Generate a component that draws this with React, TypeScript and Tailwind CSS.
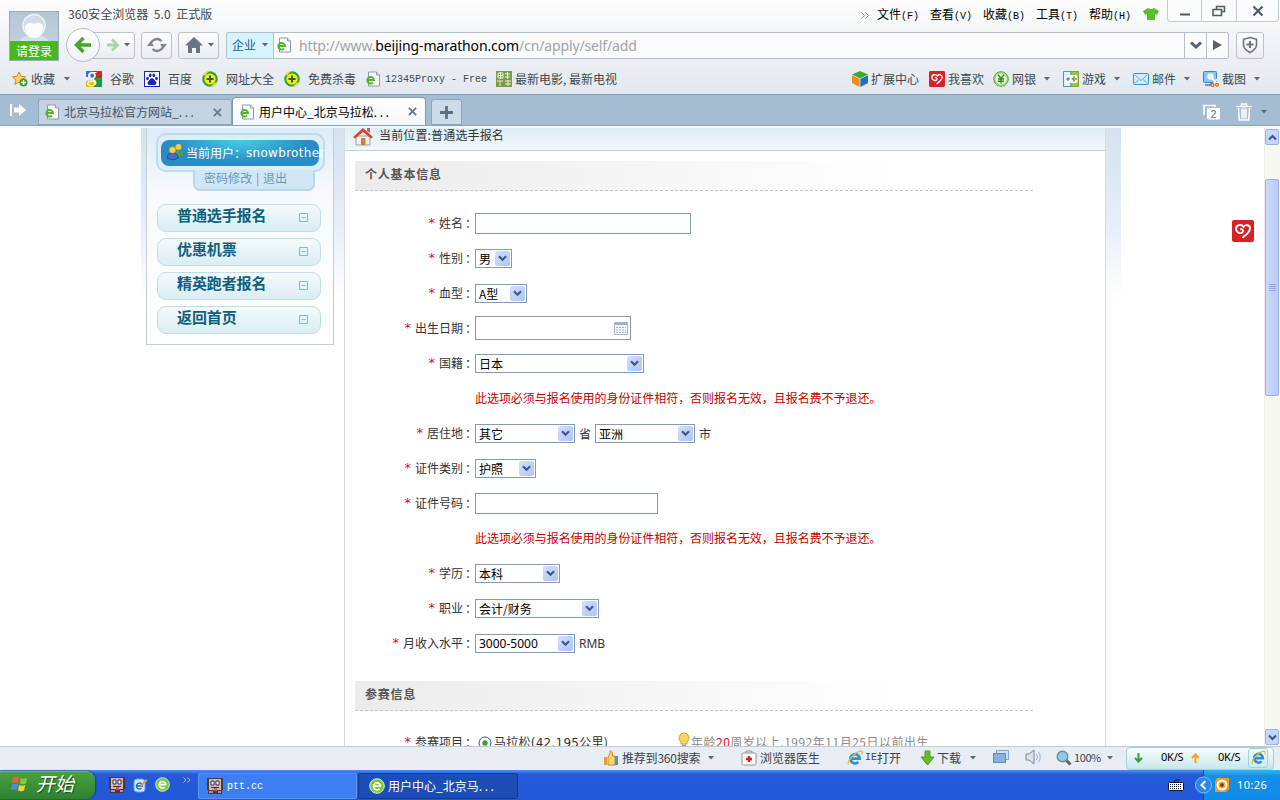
import type { ReactNode } from 'react'
import clsx from 'clsx'

function Caret({ className }: { className?: string }) {
  return (
    <svg width="6" height="4" viewBox="0 0 6 4" className={clsx('shrink-0', className)}>
      <path d="M0 0h6L3 3.5z" fill="#5d6671" />
    </svg>
  )
}

function PageIcon({ className }: { className?: string }) {
  return (
    <svg width="16" height="16" viewBox="0 0 16 16" className={clsx('shrink-0', className)}>
      <path d="M2.500 1h8l3 3v11h-11z" fill="#fbfcfd" stroke="#8d99a6" />
      <path d="M10.500 1v3h3" fill="#dfe5ea" stroke="#8d99a6" />
      <path d="M1.500 9h6.500a3.300 3.300 0 1 0-1 2.600" fill="none" stroke="#4fb52a" strokeWidth="2" />
    </svg>
  )
}

function GreenE({ size = 16 }: { size?: number }) {
  return (
    <svg width={size} height={size} viewBox="0 0 16 16" className="shrink-0">
      <circle cx="8" cy="8" r="7.3" fill="#7ac943" stroke="#d6f2b8" />
      <path d="M4.500 8.200h7a3.500 3.500 0 1 0-1.200 2.800" fill="none" stroke="#fff" strokeWidth="1.800" />
    </svg>
  )
}

function BlueE({ size = 16 }: { size?: number }) {
  return (
    <svg width={size} height={size} viewBox="0 0 16 16" className="shrink-0">
      <path d="M3.500 8.700h9.200a4.600 4.600 0 1 0-1.400 3.400" fill="none" stroke="#2f8fdc" strokeWidth="2.800" />
      <path d="M1.500 14.500C-.5 11 9 1 14.500 1.200c1 .2 1 1.800 0 3.300" fill="none" stroke="#e9b53a" strokeWidth="1.200" />
    </svg>
  )
}

function HeartIcon({ size = 16 }: { size?: number }) {
  return (
    <svg width={size} height={size} viewBox="0 0 22 22" className="shrink-0">
      <rect width="22" height="22" rx="2" fill="#da2024" />
      <path
        d="M11 17.300c3.500-2.500 7-5.800 7-9 0-3.300-4.300-4.300-6.500-1.500C9.500 4 4 4.500 4 8.800c0 3.200 3.500 5 5.800 4 1.800-1 1.500-3.300-.8-3.800"
        fill="none"
        stroke="#fff"
        strokeWidth="1.900"
        strokeLinecap="round"
      />
    </svg>
  )
}

function PlusBall() {
  return (
    <svg width="16" height="16" viewBox="0 0 16 16" className="shrink-0">
      <circle cx="8" cy="8" r="7.800" fill="#3fa02a" />
      <path d="M1 4.500A7.800 7.800 0 0 1 8 .2q-3 1-4.500 4zM15 11.500a7.800 7.800 0 0 1-7 4.300q3-1 4.500-4z" fill="#f2e23a" />
      <circle cx="8" cy="8" r="5.600" fill="#f6e92a" />
      <path d="M8 4.500v7M4.500 8h7" stroke="#1f6b1b" strokeWidth="2" />
    </svg>
  )
}

function StarIcon() {
  return (
    <svg width="16" height="16" viewBox="0 0 16 16" className="shrink-0">
      <path d="M7 1l2 4.300 4.700.5-3.500 3.100 1 4.600L7 11.200 2.900 13.500l1-4.600L.4 5.800l4.600-.5z" fill="#fbd56a" stroke="#d58a1e" />
      <circle cx="11.500" cy="11.500" r="4" fill="#4c9a2a" />
      <path d="M11.500 9v5M9 11.500h5" stroke="#fff" strokeWidth="1.400" />
    </svg>
  )
}

function GoogleIcon() {
  return (
    <svg width="16" height="16" viewBox="0 0 16 16" className="shrink-0">
      <path d="M0 0h8v6H0z" fill="#3c6fd8" />
      <path d="M8 0h8v7H8z" fill="#d9231c" />
      <path d="M8 7h8v9H8z" fill="#1f9a3d" />
      <path d="M0 10l8-1v7H0z" fill="#f4b61b" />
      <path d="M10.500 1H6.500C3.500 1 2 2.700 2 4.800 2 7 4 8 6.500 7.700c0 1 .5 1.500 0 1.800C3 9.500 1 10.800 1 12.700c0 3.400 9.500 3.400 9.500-1 0-2.200-2.800-2.700-2.600-4C10 6.500 10.500 4 8.800 2h1.700z" fill="#fff" />
      <ellipse cx="6.200" cy="4.600" rx="2" ry="2.200" fill="#3c6fd8" />
      <ellipse cx="5.600" cy="12.400" rx="3" ry="1.600" fill="#f4b61b" />
    </svg>
  )
}

function BaiduIcon() {
  return (
    <svg width="16" height="16" viewBox="0 0 16 16" className="shrink-0">
      <rect x=".5" y=".5" width="15" height="15" fill="#fff" stroke="#2021c0" />
      <g fill="#1f20c8">
        <ellipse cx="3.500" cy="7.500" rx="1.300" ry="1.800" />
        <ellipse cx="6.200" cy="4.300" rx="1.300" ry="1.900" />
        <ellipse cx="9.800" cy="4.300" rx="1.300" ry="1.900" />
        <ellipse cx="12.500" cy="7.500" rx="1.300" ry="1.800" />
        <path d="M8 7.200c2 0 2.500 2 3.800 3.200 1.500 1.600.2 3.600-1.600 3.600H5.800c-1.800 0-3.100-2-1.600-3.600C5.500 9.200 6 7.200 8 7.200z" />
      </g>
    </svg>
  )
}

function FilmIcon() {
  return (
    <svg width="16" height="16" viewBox="0 0 16 16" className="shrink-0">
      <rect width="16" height="16" fill="#7d9a45" />
      <path d="M2 2h5v5H2zM2 4.500h5M4.500 1v7M9 3h5M9 6h5M11.500 1v7M1 10h6M4 10v5M9 10h6M9 13h6M12 9v6" fill="none" stroke="#e9f0d4" />
    </svg>
  )
}

function CubeIcon() {
  return (
    <svg width="16" height="16" viewBox="0 0 16 16" className="shrink-0">
      <path d="M8 0l8 3.500L8 7.500 0 3.500z" fill="#3fa535" />
      <path d="M0 4.200L7.600 8v8L0 12z" fill="#f08a1d" />
      <path d="M16 4.200L8.400 8v8L16 12z" fill="#1f6fc4" />
    </svg>
  )
}

function YuanIcon() {
  return (
    <svg width="16" height="16" viewBox="0 0 16 16" className="shrink-0">
      <circle cx="8" cy="8" r="7.300" fill="#a9d98a" stroke="#5aa336" />
      <circle cx="8" cy="8" r="5.500" fill="#eaf7d6" />
      <path d="M5 3.800l3 3.700 3-3.700M8 7.500v5M5 8h6M5 10.300h6" fill="none" stroke="#2d8a1f" strokeWidth="1.400" />
    </svg>
  )
}

function GameIcon() {
  return (
    <svg width="16" height="16" viewBox="0 0 16 16" className="shrink-0">
      <path d="M.5.5H8v15H.5z" fill="#dff1fb" stroke="#3f97ca" />
      <path d="M8 .5h7.500v15H8z" fill="#9bc63f" stroke="#7aa62b" />
      <rect x="2.500" y="4" width="12" height="8" rx="2" fill="#fff" />
      <path d="M3 8h4M5 6v4" stroke="#1d78b5" />
      <path d="M11 5.500v5M8.800 8h5" stroke="#5f8a15" strokeDasharray="2 1" strokeWidth="1.500" />
    </svg>
  )
}

function MailIcon() {
  return (
    <svg width="16" height="16" viewBox="0 0 16 16" className="shrink-0">
      <rect x=".5" y="2.500" width="15" height="11" rx="1" fill="#d3ecfa" stroke="#3b8fc6" />
      <path d="M1.500 3.500L8 9.500l6.500-6M1.500 12.500l4.500-4M14.500 12.500l-4.500-4" fill="none" stroke="#63aeda" />
    </svg>
  )
}

function ShotIcon() {
  return (
    <svg width="16" height="16" viewBox="0 0 16 16" className="shrink-0">
      <rect x=".5" y=".5" width="13" height="11" rx="1" fill="#8cc5ee" stroke="#3983bd" />
      <circle cx="7.500" cy="5.500" r="3.300" fill="#e7f5fd" />
      <path d="M2 14h6v-3" fill="none" stroke="#3983bd" strokeWidth="1.500" />
      <path d="M9 7l5 6M14 8l-4 5" stroke="#fff" strokeWidth="1.500" />
      <circle cx="9.500" cy="14" r="1.500" fill="none" stroke="#e0711b" strokeWidth="1.300" />
      <circle cx="14" cy="13.800" r="1.400" fill="none" stroke="#e0711b" strokeWidth="1.300" />
    </svg>
  )
}

function SmallX() {
  return (
    <svg width="9" height="9" viewBox="0 0 10 10" className="shrink-0">
      <path d="M1 1l8 8M9 1L1 9" stroke="#667789" strokeWidth="2" />
    </svg>
  )
}

const navBtn = 'flex h-[27px] shrink-0 items-center rounded-[3px] border border-[#b9c3ce] bg-linear-to-b from-[#fdfdfe] to-[#e9edf2]'

function Header() {
  return (
    <header className="h-[94px] bg-linear-to-b from-[#fdfdfe] to-[#e2e8ee] text-[12px] text-[#40484f]">
      <div className="flex h-[64px]">
        <div className="mt-[11px] ml-[9px] flex h-[50px] w-[50px] shrink-0 flex-col border border-[#98acbc] bg-linear-to-b from-[#b5c6d5] to-[#c7d5e0]">
          <svg width="48" height="30" viewBox="0 0 48 30">
            <path d="M9 30q3-5 10-6h10q8 1 10 6z" fill="#d6e0e8" />
            <circle cx="24" cy="14" r="11.500" fill="#d1dce6" stroke="#eff3f6" strokeWidth="1.500" />
            <path d="M14.500 15q2-4 5.500-4 4 2 8 0 4 0 5.500 4-.5 7-4.500 10.500-5 2.500-10 0-4-3.500-4.500-10.500z" fill="#fbfcfd" />
          </svg>
          <div className="h-[19px] bg-[#48b81d] text-center leading-[20px] whitespace-nowrap text-white">请登录</div>
        </div>
        <div className="flex min-w-0 flex-1 flex-col">
          <div className="flex h-[32px] items-start">
            <div className="mt-[5px] ml-[9px] w-[200px] leading-[18px] tracking-[0.05px] whitespace-pre">360安全浏览器  5.0  正式版</div>
            <div className="mt-[6px] ml-[593px] flex h-[18px] shrink-0 items-center leading-[18px] text-black">
              <svg width="8" height="7" viewBox="0 0 8 7" className="mr-[8px]">
                <path d="M.5.5l3 3-3 3M4.500.5l3 3-3 3" fill="none" stroke="#8a929a" />
              </svg>
              {[['文件', 'F'], ['查看', 'V'], ['收藏', 'B'], ['工具', 'T'], ['帮助', 'H']].map(([label, key]) => (
                <span key={key} className="w-[53px] whitespace-nowrap">
                  {label}
                  <span className="font-['Liberation_Mono'] text-[10px]">({key})</span>
                </span>
              ))}
            </div>
            <svg width="16" height="14" viewBox="0 0 16 14" className="mt-[7px] ml-px shrink-0">
              <path d="M5 1q3 2 6 0l5 3-2 4-2-1v6H4V7L2 8 0 4z" fill="#5bbf33" />
            </svg>
            <div className="ml-[8px] flex h-[22px] w-[112px] shrink-0 rounded-b-[4px] border border-t-0 border-[#c2cad3] bg-[#fafbfc]">
              <div className="flex w-[34px] items-center justify-center border-r border-[#c2cad3]">
                <svg width="12" height="12" viewBox="0 0 12 12"><path d="M1 9.500h10" stroke="#505b68" strokeWidth="2" /></svg>
              </div>
              <div className="flex w-[35px] items-center justify-center border-r border-[#c2cad3]">
                <svg width="14" height="12" viewBox="0 0 14 12">
                  <path d="M4.500 4V1.500h8v5H10M1 4.500h8.500v6H1z" fill="none" stroke="#505b68" strokeWidth="1.500" />
                </svg>
              </div>
              <div className="flex flex-1 items-center justify-center">
                <svg width="12" height="12" viewBox="0 0 12 12"><path d="M1.500 1.500l9 9M10.500 1.500l-9 9" stroke="#505b68" strokeWidth="2.200" /></svg>
              </div>
            </div>
          </div>
          <div className="-mt-px flex h-[28px] items-center">
            <div className="z-10 ml-[7px] flex h-[34px] w-[34px] shrink-0 items-center justify-center rounded-full border border-[#b4bcc5] bg-linear-to-b from-white to-[#eef1f4]">
              <svg width="18" height="18" viewBox="0 0 18 18"><path d="M9.500 2L2.500 9l7 7M3 9h14" fill="none" stroke="#45a62b" strokeWidth="3.400" /></svg>
            </div>
            <div className={clsx(navBtn, '-ml-[14px] w-[49px] pl-[19px]')}>
              <svg width="14" height="14" viewBox="0 0 14 14" className="shrink-0"><path d="M6 1.500L11.500 7 6 12.500M1 7h10" fill="none" stroke="#a5d69c" strokeWidth="2.800" /></svg>
              <Caret className="ml-[4px]" />
            </div>
            <div className={clsx(navBtn, 'ml-[6px] w-[31px] justify-center')}>
              <svg width="20" height="18" viewBox="0 0 20 18">
                <path d="M3.500 10a6.500 6.500 0 0 1 11-5M16.500 8a6.500 6.500 0 0 1-11 5" fill="none" stroke="#7b8693" strokeWidth="2.400" />
                <path d="M0 10h7L3.500 5.500zM13 8h7l-3.500 4.500z" fill="#7b8693" />
              </svg>
            </div>
            <div className={clsx(navBtn, 'ml-[6px] w-[41px] pl-[6px]')}>
              <svg width="18" height="16" viewBox="0 0 18 16"><path d="M9 0l9 8.500h-3V16h-4v-5H7v5H3V8.500H0z" fill="#6a7582" /></svg>
              <Caret className="ml-[5px]" />
            </div>
            <div className="ml-[7px] flex h-[27px] w-[1003px] shrink-0 items-center rounded-[2px] border border-[#b3bfca] bg-[#fafbfd]">
              <div className="flex h-[25px] w-[47px] shrink-0 items-center border-r border-[#8fd0ea] bg-[#d5f3fc] pl-[5px] text-[#155f8e]">
                <span className="w-[30px] whitespace-nowrap">企业</span>
                <Caret />
              </div>
              <PageIcon className="ml-[3px]" />
              <div className="ml-[6px] flex-1 font-['Noto_Sans'] text-[14px] tracking-[-0.13px] whitespace-nowrap text-[#a0a4a8]">
                http://www.<span className="text-black">beijing-marathon.com</span>/cn/apply/self/add
              </div>
              <div className="flex h-full w-[22px] items-center justify-center border-l border-[#b3bfca]">
                <svg width="12" height="8" viewBox="0 0 12 8"><path d="M1 1.500l5 4.500 5-4.500" fill="none" stroke="#56616e" strokeWidth="3" /></svg>
              </div>
              <div className="flex h-full w-[22px] items-center justify-center border-l border-[#b3bfca]">
                <svg width="9" height="10" viewBox="0 0 9 10"><path d="M0 0l9 5-9 5z" fill="#56616e" /></svg>
              </div>
            </div>
            <div className={clsx(navBtn, 'ml-[7px] w-[28px] justify-center')}>
              <svg width="18" height="18" viewBox="0 0 18 18">
                <path d="M9 1.500l6.500 1.800v5.200q0 5-6.500 8-6.500-3-6.500-8V3.300z" fill="none" stroke="#69747f" strokeWidth="1.600" />
                <path d="M9 5v7M5.500 8.500h7" stroke="#69747f" strokeWidth="2" />
              </svg>
            </div>
          </div>
        </div>
      </div>
      <Bookmarks />
    </header>
  )
}

function Mark({ icon, children, className }: { icon: ReactNode; children: ReactNode; className: string }) {
  return (
    <div className={clsx('flex shrink-0 items-center whitespace-nowrap', className)}>
      {icon}
      {children}
    </div>
  )
}

function Bookmarks() {
  return (
    <div className="flex h-[30px] items-center pl-[12px]">
      <Mark icon={<StarIcon />} className="w-[74px] gap-[3px]">收藏<Caret className="ml-[6px]" /></Mark>
      <Mark icon={<GoogleIcon />} className="w-[58px] gap-[8px]">谷歌</Mark>
      <Mark icon={<BaiduIcon />} className="w-[58px] gap-[8px]">百度</Mark>
      <Mark icon={<PlusBall />} className="w-[82px] gap-[8px]">网址大全</Mark>
      <Mark icon={<PlusBall />} className="w-[82px] gap-[8px]">免费杀毒</Mark>
      <Mark icon={<PageIcon />} className="w-[130px] gap-[3px]">
        <span className="font-['Liberation_Mono'] text-[10px] whitespace-pre">12345Proxy - Free</span>
      </Mark>
      <Mark icon={<FilmIcon />} className="w-[356px] gap-[3px]">最新电影, 最新电视</Mark>
      <Mark icon={<CubeIcon />} className="w-[77px] gap-[3px]">扩展中心</Mark>
      <Mark icon={<HeartIcon />} className="w-[64px] gap-[3px]">我喜欢</Mark>
      <Mark icon={<YuanIcon />} className="w-[70px] gap-[3px]">网银<Caret className="ml-[5px]" /></Mark>
      <Mark icon={<GameIcon />} className="w-[70px] gap-[3px]">游戏<Caret className="ml-[5px]" /></Mark>
      <Mark icon={<MailIcon />} className="w-[70px] gap-[3px]">邮件<Caret className="ml-[5px]" /></Mark>
      <Mark icon={<ShotIcon />} className="gap-[3px]">截图<Caret className="ml-[5px]" /></Mark>
    </div>
  )
}

function TabStrip() {
  return (
    <div className="flex h-[34px] flex-col border-t border-[#7e9bb8] bg-[#a4bdd3] text-[12px]">
      <div className="flex h-[30px] items-end">
        <div className="flex h-[30px] w-[38px] shrink-0 items-center pl-[10px]">
          <svg width="17" height="14" viewBox="0 0 17 14"><path d="M0 1h2v12H0zM4 4.500h5V1l7 6-7 6V9.500H4z" fill="#fff" /></svg>
        </div>
        <div className="flex h-[26px] w-[194px] shrink-0 items-center rounded-t-[3px] border border-[#8ba5bf] bg-[#c3d3e1] pr-[9px] pl-[6px] text-[#45525e]">
          <PageIcon />
          <span className="ml-[3px] flex-1 whitespace-nowrap">北京马拉松官方网站_<span className="tracking-[2.600px]">...</span></span>
          <SmallX />
        </div>
        <div className="flex h-[28px] w-[194px] shrink-0 items-center rounded-t-[4px] border border-b-0 border-[#7f9ab5] bg-linear-to-b from-white to-[#f4f7fa] pr-[8px] pl-[7px] text-black">
          <PageIcon />
          <span className="ml-[3px] flex-1 whitespace-nowrap">用户中心_北京马拉松<span className="tracking-[2.600px]">...</span></span>
          <SmallX />
        </div>
        <div className="ml-[5px] flex h-[26px] w-[31px] items-center justify-center rounded-t-[3px] border border-[#8ba5bf] bg-[#cddbe7]">
          <svg width="13" height="13" viewBox="0 0 13 13"><path d="M6.500 0v13M0 6.500h13" stroke="#5f6e7e" strokeWidth="2.800" /></svg>
        </div>
        <div className="ml-auto flex h-[27px] w-[77px] shrink-0 items-center">
          <svg width="18" height="16" viewBox="0 0 18 16">
            <path d="M1 11V1.500h11V3" fill="none" stroke="#fff" strokeWidth="1.600" />
            <rect x="4" y="4" width="13" height="11.500" rx="1" fill="#fff" />
            <text x="10.500" y="13.500" fontSize="10" textAnchor="middle" fill="#52687d" fontFamily="Liberation Sans">2</text>
          </svg>
          <svg width="16" height="18" viewBox="0 0 16 18" className="ml-[15px]">
            <path d="M5.500 3V1h5v2M.5 3.500h15M2.500 5l.8 12h9.400l.8-12M6 5.500v10M8 5.500v10M10 5.500v10" fill="none" stroke="#fff" strokeWidth="1.500" />
          </svg>
          <Caret className="ml-[9px]" />
        </div>
      </div>
      <div className="h-[3px] border-t border-[#89a3bd] bg-[#f4f7fa]" />
    </div>
  )
}

function SideItem({ children }: { children: string }) {
  return (
    <div className="flex h-[28px] items-center justify-between rounded-[9px] border border-[#c3dde6] bg-linear-to-b from-[#f4fafc] to-[#d9edf2] pr-[12px] pl-[19px]">
      <span className="-mt-[7px] text-[15px] leading-[20px] font-bold tracking-[-0.1px] text-[#0c6080]">{children}</span>
      <svg width="9" height="9" viewBox="0 0 9 9" className="-mt-[2px]"><path d="M.5.5h8v8h-8zM2.500 4.500h4" fill="none" stroke="#80b8c8" /></svg>
    </div>
  )
}

function Sidebar() {
  return (
    <aside className="relative z-10 h-[217px] w-[188px] shrink-0 border border-t-0 border-[#c3ced9] bg-linear-to-b from-[#dcecf8] via-[#f6fafd] via-30% to-white px-[9px] pt-[5px]">
      <div className="h-[39px] w-[169px] rounded-[10px] border-2 border-[#bcdcee] bg-[#dceef8] px-[3px] pt-[5px]">
        <div className="flex h-[26px] w-[158px] items-center rounded-[8px] bg-radial-[at_50%_0%] from-[#45cfe3] to-[#2b8bc6] to-60% pl-[6px] text-[12px] whitespace-nowrap text-white">
          <svg width="17" height="18" viewBox="0 0 17 18" className="-mt-[3px] mr-[2px] shrink-0">
            <path d="M8 9q4-3 8 1v3H9z" fill="#4ba53a" />
            <circle cx="11.500" cy="4" r="3" fill="#f8c93c" />
            <path d="M0 15q0-5 5.500-5t5.500 5l-5 2z" fill="#3f6fd2" stroke="#224a9e" />
            <circle cx="5.500" cy="7" r="3.300" fill="#f9cf4b" stroke="#b8862a" strokeWidth=".6" />
          </svg>
          <span className="w-[61px]">当前用户：</span>
          <span className="font-['DejaVu_Sans'] tracking-[0.3px]">snowbrother</span>
        </div>
      </div>
      <div className="-mt-[2px] ml-[37px] h-[21px] w-[122px] rounded-b-[7px] border-2 border-t-0 border-[#b8d8ea] bg-[#d2e7f5] pl-[9px] text-[12px] leading-[15px] tracking-[0.05px] whitespace-nowrap text-[#6b98b4]">
        密码修改 <span className="mx-px">|</span> 退出
      </div>
      <div className="mt-[13px] ml-px flex w-[164px] flex-col gap-[6px]">
        <SideItem>普通选手报名</SideItem>
        <SideItem>优惠机票</SideItem>
        <SideItem>精英跑者报名</SideItem>
        <SideItem>返回首页</SideItem>
      </div>
    </aside>
  )
}

function Select({ value, className }: { value: string; className: string }) {
  return (
    <div className={clsx('flex h-[19px] shrink-0 items-center justify-between border border-[#7f9db9] bg-white pr-px pl-[3px] whitespace-nowrap text-black', className)}>
      <span className="leading-[17px]">{value}</span>
      <div className="flex h-[15px] w-[15px] shrink-0 items-center justify-center rounded-[2px] bg-linear-to-br from-[#d3e0fd] to-[#aec4f5]">
        <svg width="9" height="7" viewBox="0 0 9 7"><path d="M1 1.200l3.500 3.500L8 1.200" fill="none" stroke="#3f5787" strokeWidth="2.200" /></svg>
      </div>
    </div>
  )
}

function Row({ label, children }: { label?: string; children: ReactNode }) {
  return (
    <div className="flex h-[35px] items-center text-[12px] text-[#333]">
      <div className="-mt-[2px] flex w-[130px] shrink-0 justify-end whitespace-nowrap">
        {label && (
          <>
            <span className="mr-[4px] font-['DejaVu_Sans'] text-[13px] leading-[18px] text-[#e0101c]">*</span>
            <span>{label}</span>
            <span className="w-[12px] pl-[2px]">：</span>
          </>
        )}
      </div>
      {children}
    </div>
  )
}

function SectionTitle({ children }: { children: string }) {
  return (
    <div className="h-[30px] w-[678px] border-b border-dashed border-[#c6c6c6] bg-linear-to-r from-[#ebebeb] to-white to-80% pl-[10px] text-[12px] leading-[25px] font-bold tracking-[0.8px] text-[#555]">
      {children}
    </div>
  )
}

const warning = '此选项必须与报名使用的身份证件相符，否则报名无效，且报名费不予退还。'

function Warning() {
  return <span className="-mt-[2px] tracking-[-0.05px] whitespace-nowrap text-[#c80000]">{warning}</span>
}

function Content() {
  return (
    <main className="h-full w-[762px] shrink-0 border-x border-[#d5dce3] bg-white">
      <div className="flex h-[23px] items-start border-b border-[#c4d2d8] bg-linear-to-b from-[#deeef6] to-[#eef7f9] pl-[8px] text-[12px] leading-[14px] tracking-[0.15px] text-[#333]">
        <svg width="20" height="18" viewBox="0 0 20 18" className="mr-[6px]">
          <path d="M3 8h14v9H3z" fill="#f3efe9" stroke="#a79c92" />
          <path d="M10 0L0 9l2 1.500L10 4l8 6.500L20 9z" fill="#d9432f" />
          <path d="M14 0h3v5l-3-2z" fill="#a8695a" />
          <path d="M8 10h4.500v7H8z" fill="#c98045" />
        </svg>
        当前位置:普通选手报名
      </div>
      <div className="mt-[10px] pl-[10px]">
        <SectionTitle>个人基本信息</SectionTitle>
      </div>
      <div className="mt-[15px]">
        <Row label="姓名"><div className="h-[21px] w-[216px] border border-[#7f9db9]" /></Row>
        <Row label="性别"><Select value="男" className="w-[37px]" /></Row>
        <Row label="血型"><Select value="A型" className="w-[52px]" /></Row>
        <Row label="出生日期">
          <div className="-mt-px flex h-[24px] w-[156px] items-center justify-end border border-[#8f969c] pr-[2px]">
            <svg width="14" height="13" viewBox="0 0 14 13">
              <rect x=".5" y=".5" width="13" height="12" fill="#f3f6fa" stroke="#aab6c8" />
              <path d="M1 2h12" stroke="#9fb0cb" strokeWidth="2" />
              <path d="M2 5.500h10M2 8h10M2 10.500h10" stroke="#a9b6c9" strokeDasharray="2 1" />
            </svg>
          </div>
        </Row>
        <Row label="国籍"><Select value="日本" className="w-[169px]" /></Row>
        <Row><Warning /></Row>
        <Row label="居住地">
          <Select value="其它" className="w-[100px]" />
          <span className="ml-[4px] w-[16px]">省</span>
          <Select value="亚洲" className="w-[100px]" />
          <span className="ml-[4px]">市</span>
        </Row>
        <Row label="证件类别"><Select value="护照" className="w-[61px]" /></Row>
        <Row label="证件号码"><div className="h-[21px] w-[183px] border border-[#7f9db9]" /></Row>
        <Row><Warning /></Row>
        <Row label="学历"><Select value="本科" className="w-[85px]" /></Row>
        <Row label="职业"><Select value="会计/财务" className="w-[124px]" /></Row>
        <Row label="月收入水平">
          <Select value="3000-5000" className="w-[100px] font-['Noto_Sans']" />
          <span className="ml-[4px] font-['Noto_Sans']">RMB</span>
        </Row>
      </div>
      <div className="mt-[20px] pl-[10px]">
        <SectionTitle>参赛信息</SectionTitle>
      </div>
      <div className="mt-[14px]">
        <Row label="参赛项目">
          <svg width="14" height="14" viewBox="0 0 14 14" className="mr-[2px] ml-[3px] shrink-0">
            <circle cx="7" cy="7" r="6" fill="#fff" stroke="#2c5a80" />
            <circle cx="7" cy="7" r="2.700" fill="#35a435" />
          </svg>
          <span className="w-[183px] tracking-[0.25px] whitespace-nowrap">马拉松<span className="font-['DejaVu_Sans']">(42.195</span>公里)</span>
          <svg width="14" height="17" viewBox="0 0 14 17" className="-mt-[4px] shrink-0">
            <path d="M7 1a5 5 0 0 1 3 9v2H4v-2a5 5 0 0 1 3-9z" fill="#fbd55d" stroke="#dba02b" />
            <path d="M5 13.500h4M5 15.500h4" stroke="#9098a2" strokeWidth="1.500" />
          </svg>
          <span className="-mt-px tracking-[0.5px] whitespace-nowrap text-[#8b8b8b]">
            年龄<span className="text-[#e0101c]">20</span>周岁以上,1992年11月25日以前出生
          </span>
        </Row>
      </div>
    </main>
  )
}

function Scrollbar() {
  return (
    <div className="flex h-full w-[16px] shrink-0 flex-col border-l border-[#eeede5] bg-[#f8f8f3]">
      <div className="mt-px flex h-[16px] w-[14px] items-center justify-center rounded-[2px] border border-[#9ab2e6] bg-[#c6d5fb]">
        <svg width="9" height="7" viewBox="0 0 9 7"><path d="M1 5.500L4.500 2 8 5.500" fill="none" stroke="#42568c" strokeWidth="2.200" /></svg>
      </div>
      <div className="mt-[34px] flex h-[217px] w-[14px] items-center justify-center rounded-[2px] border border-[#9ab2e6] bg-linear-to-r from-[#cbd8fc] to-[#b9cbf8]">
        <svg width="7" height="8" viewBox="0 0 7 8"><path d="M0 .5h7M0 2.500h7M0 4.500h7M0 6.500h7" stroke="#90abe8" /></svg>
      </div>
      <div className="mt-auto mb-[1px] flex h-[16px] w-[14px] items-center justify-center rounded-[2px] border border-[#9ab2e6] bg-[#c6d5fb]">
        <svg width="9" height="7" viewBox="0 0 9 7"><path d="M1 1.500L4.500 5 8 1.500" fill="none" stroke="#42568c" strokeWidth="2.200" /></svg>
      </div>
    </div>
  )
}

function StatusBar() {
  return (
    <div className="flex h-[24px] items-center border-t border-[#c3cad2] bg-[#e8edf3] pl-[603px] text-[12px] leading-[16px] text-[#3a434c]">
      <div className="-mt-[2px] flex w-[138px] shrink-0 items-center gap-[3px] whitespace-nowrap">
        <svg width="16" height="16" viewBox="0 0 16 16" className="shrink-0">
          <path d="M1 7h3v8H1z" fill="#e6a23a" />
          <path d="M5 7l2-3V1q3 0 2.500 5H12v9H5z" fill="#fcd470" stroke="#c98c2a" />
          <path d="M12 6h3v9h-3z" fill="#4a90d2" />
        </svg>
        <span className="tracking-[-0.2px]">推荐到360搜索</span>
        <Caret className="ml-[5px]" />
      </div>
      <div className="-mt-[2px] flex w-[106px] shrink-0 items-center gap-[3px] whitespace-nowrap">
        <svg width="16" height="16" viewBox="0 0 16 16" className="shrink-0">
          <path d="M5 3V1h6v2" fill="none" stroke="#8b9299" />
          <rect x="1" y="3" width="14" height="12" rx="1.500" fill="#fff" stroke="#8b9299" />
          <path d="M8 6v6M5 9h6" stroke="#de2020" strokeWidth="2.400" />
        </svg>
        浏览器医生
      </div>
      <div className="-mt-[2px] flex w-[73px] shrink-0 items-center whitespace-nowrap">
        <BlueE />
        <span className="ml-[2px] w-[12px] font-['Liberation_Mono'] text-[10px]">IE</span>
        <span>打开</span>
      </div>
      <div className="-mt-[2px] flex w-[73px] shrink-0 items-center gap-[2px] whitespace-nowrap">
        <svg width="15" height="16" viewBox="0 0 15 16" className="shrink-0"><path d="M5 1h5v6h4l-6.500 8L1 7h4z" fill="#66bb2a" stroke="#4a9a1c" /></svg>
        下载
        <Caret className="ml-[7px]" />
      </div>
      <svg width="16" height="14" viewBox="0 0 16 14" className="-mt-[3px] shrink-0">
        <rect x="3.500" y=".5" width="12" height="9" fill="#cfe0f0" stroke="#86a7c6" />
        <rect x=".5" y="3.500" width="12" height="9" fill="#84b4de" stroke="#5f8db8" />
      </svg>
      <svg width="17" height="16" viewBox="0 0 17 16" className="-mt-[3px] ml-[16px] shrink-0">
        <path d="M1 5h3l5-4v14l-5-4H1z" fill="#dfe3e7" stroke="#7f878f" />
        <path d="M11.500 5q2 3 0 6M13.500 3q3.500 5 0 10" fill="none" stroke="#8fb4d8" />
      </svg>
      <svg width="16" height="16" viewBox="0 0 16 16" className="-mt-[2px] ml-[14px] shrink-0">
        <path d="M9 9l5.500 5.500" stroke="#5b646d" strokeWidth="3" />
        <circle cx="6.500" cy="6.500" r="5.300" fill="#8cc8f0" stroke="#7b8791" strokeWidth="1.400" />
      </svg>
      <span className="-mt-[3px] ml-[2px] w-[33px] shrink-0 text-[11px] tracking-[-0.4px]">100%</span>
      <Caret className="-mt-[2px]" />
      <div className="ml-auto flex h-[23px] w-[148px] shrink-0 items-center rounded-[4px] border border-[#a8cdd5] bg-linear-to-b from-[#f8fcfc] to-[#c5e9ec] pl-[7px] font-['Noto_Sans'] text-[11px] tracking-[-0.2px] text-black">
        <svg width="9" height="10" viewBox="0 0 9 10" className="-mt-[2px] shrink-0"><path d="M4.500 0v8M1 5l3.500 3.500L8 5" fill="none" stroke="#35a02b" strokeWidth="2" /></svg>
        <span className="-mt-[3px] ml-[18px] w-[30px] whitespace-nowrap">0K/S</span>
        <svg width="9" height="10" viewBox="0 0 9 10" className="-mt-[2px] shrink-0"><path d="M4.500 10V2M1 5l3.500-3.500L8 5" fill="none" stroke="#f0a41c" strokeWidth="2" /></svg>
        <span className="-mt-[3px] ml-[18px] w-[30px] whitespace-nowrap">0K/S</span>
        <span className="-mt-[2px] flex h-[20px] w-[20px] items-center justify-center rounded-[3px] border border-[#9fd2da]"><BlueE size={15} /></span>
      </div>
      <div className="w-[6px] shrink-0" />
    </div>
  )
}

function PttIcon() {
  return (
    <svg width="16" height="16" viewBox="0 0 16 16" className="shrink-0">
      <path d="M0 0h16v12h-1v4H1v-4H0z" fill="#4e3836" />
      <path d="M2 1h12v11H2z" fill="#cfb9b4" />
      <path d="M4 3h3v4H4zM9 3h3v4H9z" fill="#fff" stroke="#38285a" />
      <path d="M4 9h8v1H4z" fill="#4a2c2c" />
      <path d="M7 10h3v3H7z" fill="#e0478d" />
      <path d="M2 13h4v2H2zM11 13h3v2h-3z" fill="#a89a94" />
    </svg>
  )
}

function Taskbar() {
  return (
    <div className="flex h-[30px] items-center bg-linear-to-b from-[#4a92ee] via-[#245adb] via-15% to-[#2258d6] text-[12px] text-white">
      <div className="flex h-[28px] w-[95px] shrink-0 items-center rounded-r-[9px] border-t border-[#6cb765] bg-linear-to-b from-[#49a040] to-[#2f822d] pl-[11px] shadow-[1px_0_2px_#173f8a]">
        <svg width="17" height="16" viewBox="0 0 17 16" className="-mt-[3px] shrink-0">
          <path d="M2 1.500q3-1.500 6 0L7 7Q4 5.500 1 7z" fill="#f0612c" />
          <path d="M9.500 2q3 1.500 6.500 0l-1.200 5.500q-3 1.500-6 0z" fill="#8cc63f" />
          <path d="M.8 8.500q3-1.500 6 0L5.500 14q-3-1.500-5.500 0z" fill="#4a8cf0" />
          <path d="M8 9q3 1.500 6.300 0L13 14.500q-3 1.500-6 0z" fill="#fbd02f" />
        </svg>
        <span className="-mt-[5px] ml-[8px] text-[19px] leading-[24px] whitespace-nowrap italic [text-shadow:1px_1px_1px_#1c4a1a]">开始</span>
      </div>
      <div className="-mt-px ml-[14px] flex shrink-0 items-center gap-[7px]">
        <PttIcon />
        <svg width="16" height="16" viewBox="0 0 16 16">
          <rect x="2" y="2" width="11" height="13" rx="3" fill="#cdeafb" stroke="#5aa7dc" />
          <path d="M4.500 9h6a3 3 0 1 0-1 2.300" fill="none" stroke="#1e6fc0" strokeWidth="1.400" />
          <path d="M8 8l6-6 1.500 1.500-6 6z" fill="#e29a4c" />
        </svg>
        <GreenE size={15} />
      </div>
      <svg width="8" height="6" viewBox="0 0 8 6" className="mb-[10px] ml-[13px] shrink-0"><path d="M.5.5L3 3 .5 5.500M4.500.5L7 3 4.500 5.500" fill="none" stroke="#a9c9f8" /></svg>
      <div className="mt-[2px] ml-[7px] flex h-[26px] w-[159px] shrink-0 items-center gap-[4px] rounded-[2px] border border-[#5b97f8] bg-[#3c7ff3] pl-[8px]">
        <PttIcon />
        <span className="font-['Liberation_Mono'] text-[10px]">ptt.cc</span>
      </div>
      <div className="mt-[2px] ml-px flex h-[26px] w-[160px] shrink-0 items-center gap-[3px] rounded-[2px] border border-[#15398b] bg-[#1c4db6] pl-[10px]">
        <GreenE />
        <span className="-mt-px whitespace-nowrap">用户中心_北京马<span className="tracking-[2.600px]">...</span></span>
      </div>
      <svg width="16" height="12" viewBox="0 0 16 12" className="ml-auto shrink-0">
        <path d="M6 3q0-2 3-2t2-1" fill="none" stroke="#0b1530" />
        <rect x=".5" y="3.500" width="15" height="8" rx="1" fill="#fff" stroke="#0b1530" />
        <path d="M2 5.500h12M2 7.500h12M2 9.500h12" stroke="#0b1530" strokeDasharray="1 1" />
      </svg>
      <div className="ml-[19px] flex h-[30px] w-[77px] shrink-0 items-center border-l border-[#0b4bb0] bg-linear-to-b from-[#35b3f6] via-[#1290ea] via-20% to-[#0f8aea]">
        <svg width="17" height="18" viewBox="0 0 17 18" className="-ml-[9px] shrink-0">
          <circle cx="8.500" cy="9" r="8" fill="#2a86ea" stroke="#7cc2fb" />
          <path d="M10.500 5L6.500 9l4 4" fill="none" stroke="#fff" strokeWidth="2" />
        </svg>
        <svg width="16" height="16" viewBox="0 0 16 16" className="ml-[2px] shrink-0">
          <path d="M3 1h12v11l-3 3H1V4z" fill="#f39a1e" />
          <circle cx="8" cy="8" r="5.500" fill="#fff" />
          <circle cx="8" cy="8" r="3.500" fill="#f7b32d" />
          <circle cx="8" cy="8" r="2" fill="#a52b1c" />
        </svg>
        <span className="ml-[7px] font-['Noto_Sans'] text-[11px] tracking-[0.4px]">10:26</span>
      </div>
    </div>
  )
}

export default function App() {
  return (
    <div className="flex h-[800px] w-[1280px] flex-col overflow-hidden bg-white font-['Noto_Sans_CJK_SC',sans-serif]">
      <Header />
      <TabStrip />
      <div className="flex h-[618px] overflow-hidden">
        <div className="w-[141px] shrink-0" />
        <div className="flex w-[980px] shrink-0 bg-linear-to-b from-[#d6e2f0] via-[#e6edf8] via-15% to-white to-28%">
          <div className="flex w-[203px] shrink-0 pl-[5px]">
            <Sidebar />
          </div>
          <Content />
        </div>
        <div className="flex flex-1 justify-end pt-[92px] pr-[10px]">
          <HeartIcon size={22} />
        </div>
        <Scrollbar />
      </div>
      <StatusBar />
      <Taskbar />
    </div>
  )
}
